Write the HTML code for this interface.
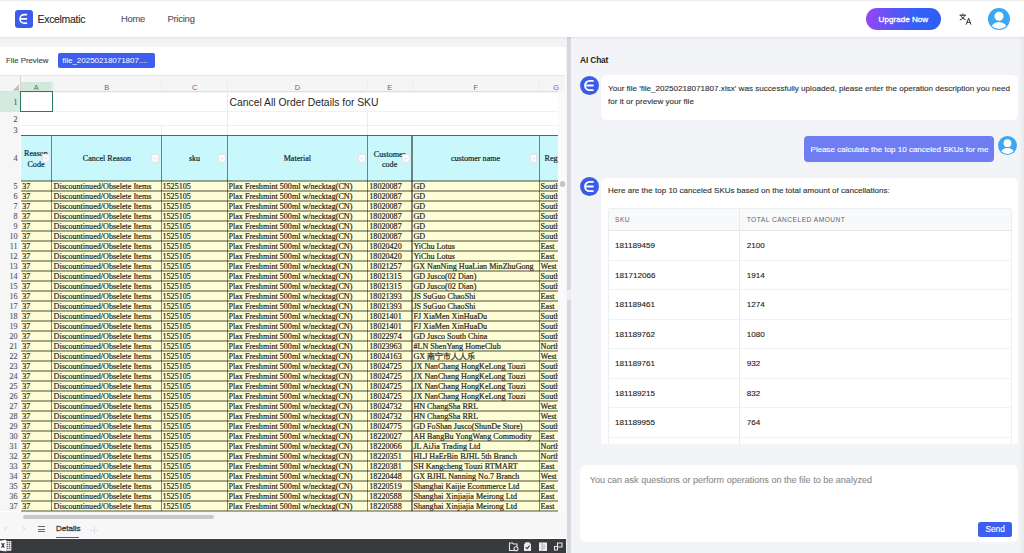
<!DOCTYPE html>
<html><head><meta charset="utf-8"><style>
html,body{margin:0;padding:0;width:1024px;height:553px;overflow:hidden;background:#f1f2f4}
.r,.t{position:absolute}
.t{white-space:nowrap}
.s{-webkit-text-stroke:0.2px currentColor}
.m{-webkit-text-stroke:0.3px currentColor}
.n{-webkit-text-stroke:0.12px currentColor}
</style></head><body>
<div class="r" style="left:0px;top:0px;width:1024px;height:553px;background:#f2f3f5"></div>
<div class="r" style="left:0px;top:46.5px;width:566px;height:506.5px;background:#fff"></div>
<div class="r" style="left:566.5px;top:37px;width:4.3px;height:516px;background:#d7d8db"></div>
<div class="r" style="left:566.5px;top:290px;width:4.3px;height:10px;background:#eceef0"></div>
<div class="r" style="left:570.8px;top:37px;width:453.2px;height:516px;background:#f3f4f7"></div>
<div class="r" style="left:1019px;top:37px;width:5px;height:516px;background:linear-gradient(90deg,#f3f4f7,#e9eaec)"></div>
<div class="r" style="left:0px;top:0px;width:1024px;height:37px;background:#fff;box-shadow:0 1px 2px rgba(0,0,0,0.08)"></div>
<div class="r" style="left:0px;top:0px;width:1024px;height:2.4px;background:linear-gradient(#e9e9e9,#f3f3f3 40%,#fff)"></div>
<div class="r" style="left:15px;top:9.8px;width:17.8px;height:17.8px;background:#3c5ce7;border-radius:3px"><svg width="100%" height="100%" viewBox="0 0 20 20"><path d="M12.9 5.2H10.4A4.8 4.8 0 0 0 10.4 14.8H12.9M7.4 10H12.9" fill="none" stroke="#fff" stroke-width="1.8" stroke-linecap="round"/></svg></div>
<div class="t n" style="left:37.60px;top:11.96px;font:normal 10.5px/14px 'Liberation Sans', sans-serif;color:#2b2b2b;letter-spacing:-0.33px;">Excelmatic</div>
<div class="t n" style="left:120.90px;top:12.44px;font:normal 9.4px/13px 'Liberation Sans', sans-serif;color:#555;letter-spacing:-0.2px;">Home</div>
<div class="t n" style="left:167.40px;top:12.44px;font:normal 9.4px/13px 'Liberation Sans', sans-serif;color:#555;letter-spacing:-0.2px;">Pricing</div>
<div class="r" style="left:865.6px;top:8px;width:75.6px;height:22px;border-radius:11px;background:linear-gradient(90deg,#9546f6 0%,#5d55f4 35%,#3260f6 68%,#2d5ef4 100%)"></div>
<div class="t m" style="left:878.60px;top:13.79px;font:normal 8.1px/11px 'Liberation Sans', sans-serif;color:#fff;">Upgrade Now</div>
<svg class="r" style="left:959px;top:13px;width:14px;height:12px" viewBox="0 0 14 12"><g fill="none" stroke="#2a2a2a" stroke-width="0.95" stroke-linecap="round" stroke-linejoin="round"><path d="M1 2.2H6.6M3.8 0.9V2.2M1.8 2.2C2.6 4.6 4.2 6 6.3 6.7M5.8 2.2C5.2 4.6 3.5 6 1.2 6.8"/><path d="M7.3 11.3L9.6 5.2L11.9 11.3M8.1 9.3H11.1"/></g></svg>
<div class="r" style="left:988px;top:8px;width:22px;height:22px"><svg width="100%" height="100%" viewBox="0 0 22 22"><defs><clipPath id="avc"><circle cx="11" cy="11" r="10"/></clipPath></defs><circle cx="11" cy="11" r="11" fill="#3aa7f4"/><circle cx="11" cy="8.3" r="4.5" fill="#fff"/><ellipse cx="11" cy="19.6" rx="7.6" ry="5.6" fill="#fff" clip-path="url(#avc)"/></svg></div>
<div class="t n" style="left:6.00px;top:55.10px;font:normal 7.8px/11px 'Liberation Sans', sans-serif;color:#444;">File Preview</div>
<div class="r" style="left:58px;top:53px;width:97.2px;height:15px;background:#3d5ef0;border-radius:2px"></div>
<div class="t " style="left:62.30px;top:55.33px;font:normal 8px/11px 'Liberation Sans', sans-serif;color:#fff;letter-spacing:-0.02px;">file_20250218071807....</div>
<div class="r" style="left:0;top:0;width:566px;height:553px;overflow:hidden">
<div class="r" style="left:0px;top:74.5px;width:564.5px;height:17px;background:#f5f5f5;border-top:0.6px solid #e6e6e6"></div>
<div class="r" style="left:0px;top:91.5px;width:20.5px;height:419px;background:#f6f6f6"></div>
<div class="r" style="left:0px;top:91px;width:558px;height:0.6px;background:#dedede"></div>
<div class="r" style="left:20px;top:76px;width:0.8px;height:15.5px;background:#d6d6d6"></div>
<div class="r" style="left:19.6px;top:91.5px;width:1px;height:419.5px;background:#fff"></div>
<div class="r" style="left:20.5px;top:82px;width:32px;height:9.5px;background:#d0e9dc"></div>
<div class="r" style="left:0px;top:91.5px;width:20.5px;height:20px;background:#d3eadf"></div>
<svg class="r" style="left:12px;top:83.5px;width:8px;height:7px" viewBox="0 0 8 7"><path d="M7 0.5V6.5H0.5Z" fill="#bdbdbd"/></svg>
<div class="t " style="left:-63.90px;width:200px;text-align:center;top:82.54px;font:normal 7.4px/10px 'Liberation Sans', sans-serif;color:#6a6a6a;">A</div>
<div class="t " style="left:6.65px;width:200px;text-align:center;top:82.54px;font:normal 7.4px/10px 'Liberation Sans', sans-serif;color:#6a6a6a;">B</div>
<div class="t " style="left:94.55px;width:200px;text-align:center;top:82.54px;font:normal 7.4px/10px 'Liberation Sans', sans-serif;color:#6a6a6a;">C</div>
<div class="t " style="left:197.40px;width:200px;text-align:center;top:82.54px;font:normal 7.4px/10px 'Liberation Sans', sans-serif;color:#6a6a6a;">D</div>
<div class="t " style="left:289.65px;width:200px;text-align:center;top:82.54px;font:normal 7.4px/10px 'Liberation Sans', sans-serif;color:#6a6a6a;">E</div>
<div class="t " style="left:375.75px;width:200px;text-align:center;top:82.54px;font:normal 7.4px/10px 'Liberation Sans', sans-serif;color:#6a6a6a;">F</div>
<div class="t " style="left:456.00px;width:200px;text-align:center;top:82.54px;font:normal 7.4px/10px 'Liberation Sans', sans-serif;color:#6a6a6a;">G</div>
<div class="r" style="left:51.400000000000006px;top:80px;width:0.6px;height:11.5px;background:#ececec"></div>
<div class="r" style="left:161.29999999999998px;top:80px;width:0.6px;height:11.5px;background:#ececec"></div>
<div class="r" style="left:227.2px;top:80px;width:0.6px;height:11.5px;background:#ececec"></div>
<div class="r" style="left:367.0px;top:80px;width:0.6px;height:11.5px;background:#ececec"></div>
<div class="r" style="left:411.7px;top:80px;width:0.6px;height:11.5px;background:#ececec"></div>
<div class="r" style="left:539.2px;top:80px;width:0.6px;height:11.5px;background:#ececec"></div>
<div class="r" style="left:20.5px;top:110.7px;width:537.3px;height:0.6px;background:#f0f0f0"></div>
<div class="r" style="left:20.5px;top:124.7px;width:537.3px;height:0.6px;background:#f0f0f0"></div>
<div class="r" style="left:161.3px;top:125px;width:0.6px;height:10.5px;background:#ececec"></div>
<div class="r" style="left:227.2px;top:91.5px;width:0.6px;height:44px;background:#ececec"></div>
<div class="r" style="left:367px;top:111px;width:0.6px;height:24.5px;background:#ececec"></div>
<div class="t n" style="left:-182.40px;width:200px;text-align:right;top:96.97px;font:normal 8.1px/11px 'Liberation Serif', serif;color:#5a5a5a;">1</div>
<div class="t n" style="left:-182.40px;width:200px;text-align:right;top:113.57px;font:normal 8.1px/11px 'Liberation Serif', serif;color:#5a5a5a;">2</div>
<div class="t n" style="left:-182.40px;width:200px;text-align:right;top:125.47px;font:normal 8.1px/11px 'Liberation Serif', serif;color:#5a5a5a;">3</div>
<div class="t n" style="left:-182.40px;width:200px;text-align:right;top:153.17px;font:normal 8.1px/11px 'Liberation Serif', serif;color:#5a5a5a;">4</div>
<div class="t n" style="left:-182.40px;width:200px;text-align:right;top:180.57px;font:normal 8.1px/11px 'Liberation Serif', serif;color:#5a5a5a;">5</div>
<div class="t n" style="left:-182.40px;width:200px;text-align:right;top:190.57px;font:normal 8.1px/11px 'Liberation Serif', serif;color:#5a5a5a;">6</div>
<div class="t n" style="left:-182.40px;width:200px;text-align:right;top:200.57px;font:normal 8.1px/11px 'Liberation Serif', serif;color:#5a5a5a;">7</div>
<div class="t n" style="left:-182.40px;width:200px;text-align:right;top:210.57px;font:normal 8.1px/11px 'Liberation Serif', serif;color:#5a5a5a;">8</div>
<div class="t n" style="left:-182.40px;width:200px;text-align:right;top:220.57px;font:normal 8.1px/11px 'Liberation Serif', serif;color:#5a5a5a;">9</div>
<div class="t n" style="left:-182.40px;width:200px;text-align:right;top:230.57px;font:normal 8.1px/11px 'Liberation Serif', serif;color:#5a5a5a;">10</div>
<div class="t n" style="left:-182.40px;width:200px;text-align:right;top:240.57px;font:normal 8.1px/11px 'Liberation Serif', serif;color:#5a5a5a;">11</div>
<div class="t n" style="left:-182.40px;width:200px;text-align:right;top:250.57px;font:normal 8.1px/11px 'Liberation Serif', serif;color:#5a5a5a;">12</div>
<div class="t n" style="left:-182.40px;width:200px;text-align:right;top:260.57px;font:normal 8.1px/11px 'Liberation Serif', serif;color:#5a5a5a;">13</div>
<div class="t n" style="left:-182.40px;width:200px;text-align:right;top:270.57px;font:normal 8.1px/11px 'Liberation Serif', serif;color:#5a5a5a;">14</div>
<div class="t n" style="left:-182.40px;width:200px;text-align:right;top:280.57px;font:normal 8.1px/11px 'Liberation Serif', serif;color:#5a5a5a;">15</div>
<div class="t n" style="left:-182.40px;width:200px;text-align:right;top:290.57px;font:normal 8.1px/11px 'Liberation Serif', serif;color:#5a5a5a;">16</div>
<div class="t n" style="left:-182.40px;width:200px;text-align:right;top:300.57px;font:normal 8.1px/11px 'Liberation Serif', serif;color:#5a5a5a;">17</div>
<div class="t n" style="left:-182.40px;width:200px;text-align:right;top:310.57px;font:normal 8.1px/11px 'Liberation Serif', serif;color:#5a5a5a;">18</div>
<div class="t n" style="left:-182.40px;width:200px;text-align:right;top:320.57px;font:normal 8.1px/11px 'Liberation Serif', serif;color:#5a5a5a;">19</div>
<div class="t n" style="left:-182.40px;width:200px;text-align:right;top:330.57px;font:normal 8.1px/11px 'Liberation Serif', serif;color:#5a5a5a;">20</div>
<div class="t n" style="left:-182.40px;width:200px;text-align:right;top:340.57px;font:normal 8.1px/11px 'Liberation Serif', serif;color:#5a5a5a;">21</div>
<div class="t n" style="left:-182.40px;width:200px;text-align:right;top:350.57px;font:normal 8.1px/11px 'Liberation Serif', serif;color:#5a5a5a;">22</div>
<div class="t n" style="left:-182.40px;width:200px;text-align:right;top:360.57px;font:normal 8.1px/11px 'Liberation Serif', serif;color:#5a5a5a;">23</div>
<div class="t n" style="left:-182.40px;width:200px;text-align:right;top:370.57px;font:normal 8.1px/11px 'Liberation Serif', serif;color:#5a5a5a;">24</div>
<div class="t n" style="left:-182.40px;width:200px;text-align:right;top:380.57px;font:normal 8.1px/11px 'Liberation Serif', serif;color:#5a5a5a;">25</div>
<div class="t n" style="left:-182.40px;width:200px;text-align:right;top:390.57px;font:normal 8.1px/11px 'Liberation Serif', serif;color:#5a5a5a;">26</div>
<div class="t n" style="left:-182.40px;width:200px;text-align:right;top:400.57px;font:normal 8.1px/11px 'Liberation Serif', serif;color:#5a5a5a;">27</div>
<div class="t n" style="left:-182.40px;width:200px;text-align:right;top:410.57px;font:normal 8.1px/11px 'Liberation Serif', serif;color:#5a5a5a;">28</div>
<div class="t n" style="left:-182.40px;width:200px;text-align:right;top:420.57px;font:normal 8.1px/11px 'Liberation Serif', serif;color:#5a5a5a;">29</div>
<div class="t n" style="left:-182.40px;width:200px;text-align:right;top:430.57px;font:normal 8.1px/11px 'Liberation Serif', serif;color:#5a5a5a;">30</div>
<div class="t n" style="left:-182.40px;width:200px;text-align:right;top:440.57px;font:normal 8.1px/11px 'Liberation Serif', serif;color:#5a5a5a;">31</div>
<div class="t n" style="left:-182.40px;width:200px;text-align:right;top:450.57px;font:normal 8.1px/11px 'Liberation Serif', serif;color:#5a5a5a;">32</div>
<div class="t n" style="left:-182.40px;width:200px;text-align:right;top:460.57px;font:normal 8.1px/11px 'Liberation Serif', serif;color:#5a5a5a;">33</div>
<div class="t n" style="left:-182.40px;width:200px;text-align:right;top:470.57px;font:normal 8.1px/11px 'Liberation Serif', serif;color:#5a5a5a;">34</div>
<div class="t n" style="left:-182.40px;width:200px;text-align:right;top:480.57px;font:normal 8.1px/11px 'Liberation Serif', serif;color:#5a5a5a;">35</div>
<div class="t n" style="left:-182.40px;width:200px;text-align:right;top:490.57px;font:normal 8.1px/11px 'Liberation Serif', serif;color:#5a5a5a;">36</div>
<div class="t n" style="left:-182.40px;width:200px;text-align:right;top:500.57px;font:normal 8.1px/11px 'Liberation Serif', serif;color:#5a5a5a;">37</div>
<div class="t " style="left:229.60px;top:96.31px;font:normal 10.35px/14px 'Liberation Sans', sans-serif;color:#1f1f1f;">Cancel All Order Details for SKU</div>
<div class="r" style="left:20.3px;top:91.1px;width:32.4px;height:20.7px;border:1.5px solid #2d7a55;box-sizing:border-box"></div>
<div class="r" style="left:20.5px;top:135.5px;width:537.3px;height:45px;background:#c8f8fc"></div>
<div class="r" style="left:20.5px;top:180.5px;width:537.3px;height:330px;background:#fdfdd6"></div>
<div class="r" style="left:20.5px;top:135.0px;width:537.3px;height:1.1px;background:rgba(0,0,0,0.62)"></div>
<div class="r" style="left:20.5px;top:179.7px;width:537.3px;height:2.1px;background:rgba(20,20,0,0.38)"></div>
<div class="r" style="left:20.5px;top:189.7px;width:537.3px;height:2.1px;background:rgba(20,20,0,0.38)"></div>
<div class="r" style="left:20.5px;top:199.7px;width:537.3px;height:2.1px;background:rgba(20,20,0,0.38)"></div>
<div class="r" style="left:20.5px;top:209.7px;width:537.3px;height:2.1px;background:rgba(20,20,0,0.38)"></div>
<div class="r" style="left:20.5px;top:219.7px;width:537.3px;height:2.1px;background:rgba(20,20,0,0.38)"></div>
<div class="r" style="left:20.5px;top:229.7px;width:537.3px;height:2.1px;background:rgba(20,20,0,0.38)"></div>
<div class="r" style="left:20.5px;top:239.7px;width:537.3px;height:2.1px;background:rgba(20,20,0,0.38)"></div>
<div class="r" style="left:20.5px;top:249.7px;width:537.3px;height:2.1px;background:rgba(20,20,0,0.38)"></div>
<div class="r" style="left:20.5px;top:259.7px;width:537.3px;height:2.1px;background:rgba(20,20,0,0.38)"></div>
<div class="r" style="left:20.5px;top:269.7px;width:537.3px;height:2.1px;background:rgba(20,20,0,0.38)"></div>
<div class="r" style="left:20.5px;top:279.7px;width:537.3px;height:2.1px;background:rgba(20,20,0,0.38)"></div>
<div class="r" style="left:20.5px;top:289.7px;width:537.3px;height:2.1px;background:rgba(20,20,0,0.38)"></div>
<div class="r" style="left:20.5px;top:299.7px;width:537.3px;height:2.1px;background:rgba(20,20,0,0.38)"></div>
<div class="r" style="left:20.5px;top:309.7px;width:537.3px;height:2.1px;background:rgba(20,20,0,0.38)"></div>
<div class="r" style="left:20.5px;top:319.7px;width:537.3px;height:2.1px;background:rgba(20,20,0,0.38)"></div>
<div class="r" style="left:20.5px;top:329.7px;width:537.3px;height:2.1px;background:rgba(20,20,0,0.38)"></div>
<div class="r" style="left:20.5px;top:339.7px;width:537.3px;height:2.1px;background:rgba(20,20,0,0.38)"></div>
<div class="r" style="left:20.5px;top:349.7px;width:537.3px;height:2.1px;background:rgba(20,20,0,0.38)"></div>
<div class="r" style="left:20.5px;top:359.7px;width:537.3px;height:2.1px;background:rgba(20,20,0,0.38)"></div>
<div class="r" style="left:20.5px;top:369.7px;width:537.3px;height:2.1px;background:rgba(20,20,0,0.38)"></div>
<div class="r" style="left:20.5px;top:379.7px;width:537.3px;height:2.1px;background:rgba(20,20,0,0.38)"></div>
<div class="r" style="left:20.5px;top:389.7px;width:537.3px;height:2.1px;background:rgba(20,20,0,0.38)"></div>
<div class="r" style="left:20.5px;top:399.7px;width:537.3px;height:2.1px;background:rgba(20,20,0,0.38)"></div>
<div class="r" style="left:20.5px;top:409.7px;width:537.3px;height:2.1px;background:rgba(20,20,0,0.38)"></div>
<div class="r" style="left:20.5px;top:419.7px;width:537.3px;height:2.1px;background:rgba(20,20,0,0.38)"></div>
<div class="r" style="left:20.5px;top:429.7px;width:537.3px;height:2.1px;background:rgba(20,20,0,0.38)"></div>
<div class="r" style="left:20.5px;top:439.7px;width:537.3px;height:2.1px;background:rgba(20,20,0,0.38)"></div>
<div class="r" style="left:20.5px;top:449.7px;width:537.3px;height:2.1px;background:rgba(20,20,0,0.38)"></div>
<div class="r" style="left:20.5px;top:459.7px;width:537.3px;height:2.1px;background:rgba(20,20,0,0.38)"></div>
<div class="r" style="left:20.5px;top:469.7px;width:537.3px;height:2.1px;background:rgba(20,20,0,0.38)"></div>
<div class="r" style="left:20.5px;top:479.7px;width:537.3px;height:2.1px;background:rgba(20,20,0,0.38)"></div>
<div class="r" style="left:20.5px;top:489.7px;width:537.3px;height:2.1px;background:rgba(20,20,0,0.38)"></div>
<div class="r" style="left:20.5px;top:499.7px;width:537.3px;height:2.1px;background:rgba(20,20,0,0.38)"></div>
<div class="r" style="left:20.5px;top:509.7px;width:537.3px;height:2.1px;background:rgba(20,20,0,0.38)"></div>
<div class="r" style="left:50.95px;top:135.5px;width:1.5px;height:375.5px;background:rgba(0,0,0,0.47)"></div>
<div class="r" style="left:160.85px;top:135.5px;width:1.5px;height:375.5px;background:rgba(0,0,0,0.47)"></div>
<div class="r" style="left:226.75px;top:135.5px;width:1.5px;height:375.5px;background:rgba(0,0,0,0.47)"></div>
<div class="r" style="left:366.55px;top:135.5px;width:1.5px;height:375.5px;background:rgba(0,0,0,0.47)"></div>
<div class="r" style="left:411.25px;top:135.5px;width:1.5px;height:375.5px;background:rgba(0,0,0,0.47)"></div>
<div class="r" style="left:538.75px;top:135.5px;width:1.5px;height:375.5px;background:rgba(0,0,0,0.47)"></div>
<div class="t s" style="left:-64.00px;width:200px;text-align:center;top:148.07px;font:normal 8.1px/11px 'Liberation Serif', serif;color:#14282c;">Reason</div>
<div class="t s" style="left:-64.00px;width:200px;text-align:center;top:159.17px;font:normal 8.1px/11px 'Liberation Serif', serif;color:#14282c;">Code</div>
<div class="t s" style="left:7.00px;width:200px;text-align:center;top:153.37px;font:normal 8.1px/11px 'Liberation Serif', serif;color:#14282c;">Cancel Reason</div>
<div class="t s" style="left:94.50px;width:200px;text-align:center;top:153.37px;font:normal 8.1px/11px 'Liberation Serif', serif;color:#14282c;">sku</div>
<div class="t s" style="left:197.40px;width:200px;text-align:center;top:153.37px;font:normal 8.1px/11px 'Liberation Serif', serif;color:#14282c;">Material</div>
<div class="t s" style="left:289.60px;width:200px;text-align:center;top:148.77px;font:normal 8.1px/11px 'Liberation Serif', serif;color:#14282c;">Customer</div>
<div class="t s" style="left:289.60px;width:200px;text-align:center;top:159.17px;font:normal 8.1px/11px 'Liberation Serif', serif;color:#14282c;">code</div>
<div class="t s" style="left:375.50px;width:200px;text-align:center;top:153.37px;font:normal 8.1px/11px 'Liberation Serif', serif;color:#14282c;">customer name</div>
<div class="t s" style="left:544.60px;top:153.27px;font:normal 8.1px/11px 'Liberation Serif', serif;color:#14282c;">Region</div>
<div class="r" style="left:41.8px;top:154.2px;width:7.8px;height:9px;background:linear-gradient(#fff,#f6f8f8);border:0.7px solid #dfe6e7;box-sizing:border-box"><svg style="display:block" width="100%" height="100%" viewBox="0 0 8 8.6"><path d="M2.4 3.3L4 4.9L5.6 3.3" fill="none" stroke="#c4b9bf" stroke-width="0.75"/></svg></div>
<div class="r" style="left:151.3px;top:154.2px;width:7.8px;height:9px;background:linear-gradient(#fff,#f6f8f8);border:0.7px solid #dfe6e7;box-sizing:border-box"><svg style="display:block" width="100%" height="100%" viewBox="0 0 8 8.6"><path d="M2.4 3.3L4 4.9L5.6 3.3" fill="none" stroke="#c4b9bf" stroke-width="0.75"/></svg></div>
<div class="r" style="left:218px;top:154.2px;width:7.8px;height:9px;background:linear-gradient(#fff,#f6f8f8);border:0.7px solid #dfe6e7;box-sizing:border-box"><svg style="display:block" width="100%" height="100%" viewBox="0 0 8 8.6"><path d="M2.4 3.3L4 4.9L5.6 3.3" fill="none" stroke="#c4b9bf" stroke-width="0.75"/></svg></div>
<div class="r" style="left:357.8px;top:154.2px;width:7.8px;height:9px;background:linear-gradient(#fff,#f6f8f8);border:0.7px solid #dfe6e7;box-sizing:border-box"><svg style="display:block" width="100%" height="100%" viewBox="0 0 8 8.6"><path d="M2.4 3.3L4 4.9L5.6 3.3" fill="none" stroke="#c4b9bf" stroke-width="0.75"/></svg></div>
<div class="r" style="left:402.3px;top:154.2px;width:7.8px;height:9px;background:linear-gradient(#fff,#f6f8f8);border:0.7px solid #dfe6e7;box-sizing:border-box"><svg style="display:block" width="100%" height="100%" viewBox="0 0 8 8.6"><path d="M2.4 3.3L4 4.9L5.6 3.3" fill="none" stroke="#c4b9bf" stroke-width="0.75"/></svg></div>
<div class="r" style="left:529.6px;top:154.2px;width:7.8px;height:9px;background:linear-gradient(#fff,#f6f8f8);border:0.7px solid #dfe6e7;box-sizing:border-box"><svg style="display:block" width="100%" height="100%" viewBox="0 0 8 8.6"><path d="M2.4 3.3L4 4.9L5.6 3.3" fill="none" stroke="#c4b9bf" stroke-width="0.75"/></svg></div>
<div class="t s" style="left:22.30px;top:180.57px;font:normal 8.1px/11px 'Liberation Serif', serif;color:#26261a;">37</div>
<div class="t s" style="left:53.60px;top:180.57px;font:normal 8.1px/11px 'Liberation Serif', serif;color:#26261a;">Discountinued/Obselete Items</div>
<div class="t s" style="left:162.50px;top:180.57px;font:normal 8.1px/11px 'Liberation Serif', serif;color:#26261a;">1525105</div>
<div class="t s" style="left:228.50px;top:180.57px;font:normal 8.1px/11px 'Liberation Serif', serif;color:#26261a;">Plax Freshmint 500ml w/necktag(CN)</div>
<div class="t s" style="left:369.30px;top:180.57px;font:normal 8.1px/11px 'Liberation Serif', serif;color:#26261a;">18020087</div>
<div class="t s" style="left:413.40px;top:180.57px;font:normal 8.1px/11px 'Liberation Serif', serif;color:#26261a;">GD</div>
<div class="t s" style="left:540.60px;top:180.57px;font:normal 8.1px/11px 'Liberation Serif', serif;color:#26261a;">South</div>
<div class="t s" style="left:22.30px;top:190.57px;font:normal 8.1px/11px 'Liberation Serif', serif;color:#26261a;">37</div>
<div class="t s" style="left:53.60px;top:190.57px;font:normal 8.1px/11px 'Liberation Serif', serif;color:#26261a;">Discountinued/Obselete Items</div>
<div class="t s" style="left:162.50px;top:190.57px;font:normal 8.1px/11px 'Liberation Serif', serif;color:#26261a;">1525105</div>
<div class="t s" style="left:228.50px;top:190.57px;font:normal 8.1px/11px 'Liberation Serif', serif;color:#26261a;">Plax Freshmint 500ml w/necktag(CN)</div>
<div class="t s" style="left:369.30px;top:190.57px;font:normal 8.1px/11px 'Liberation Serif', serif;color:#26261a;">18020087</div>
<div class="t s" style="left:413.40px;top:190.57px;font:normal 8.1px/11px 'Liberation Serif', serif;color:#26261a;">GD</div>
<div class="t s" style="left:540.60px;top:190.57px;font:normal 8.1px/11px 'Liberation Serif', serif;color:#26261a;">South</div>
<div class="t s" style="left:22.30px;top:200.57px;font:normal 8.1px/11px 'Liberation Serif', serif;color:#26261a;">37</div>
<div class="t s" style="left:53.60px;top:200.57px;font:normal 8.1px/11px 'Liberation Serif', serif;color:#26261a;">Discountinued/Obselete Items</div>
<div class="t s" style="left:162.50px;top:200.57px;font:normal 8.1px/11px 'Liberation Serif', serif;color:#26261a;">1525105</div>
<div class="t s" style="left:228.50px;top:200.57px;font:normal 8.1px/11px 'Liberation Serif', serif;color:#26261a;">Plax Freshmint 500ml w/necktag(CN)</div>
<div class="t s" style="left:369.30px;top:200.57px;font:normal 8.1px/11px 'Liberation Serif', serif;color:#26261a;">18020087</div>
<div class="t s" style="left:413.40px;top:200.57px;font:normal 8.1px/11px 'Liberation Serif', serif;color:#26261a;">GD</div>
<div class="t s" style="left:540.60px;top:200.57px;font:normal 8.1px/11px 'Liberation Serif', serif;color:#26261a;">South</div>
<div class="t s" style="left:22.30px;top:210.57px;font:normal 8.1px/11px 'Liberation Serif', serif;color:#26261a;">37</div>
<div class="t s" style="left:53.60px;top:210.57px;font:normal 8.1px/11px 'Liberation Serif', serif;color:#26261a;">Discountinued/Obselete Items</div>
<div class="t s" style="left:162.50px;top:210.57px;font:normal 8.1px/11px 'Liberation Serif', serif;color:#26261a;">1525105</div>
<div class="t s" style="left:228.50px;top:210.57px;font:normal 8.1px/11px 'Liberation Serif', serif;color:#26261a;">Plax Freshmint 500ml w/necktag(CN)</div>
<div class="t s" style="left:369.30px;top:210.57px;font:normal 8.1px/11px 'Liberation Serif', serif;color:#26261a;">18020087</div>
<div class="t s" style="left:413.40px;top:210.57px;font:normal 8.1px/11px 'Liberation Serif', serif;color:#26261a;">GD</div>
<div class="t s" style="left:540.60px;top:210.57px;font:normal 8.1px/11px 'Liberation Serif', serif;color:#26261a;">South</div>
<div class="t s" style="left:22.30px;top:220.57px;font:normal 8.1px/11px 'Liberation Serif', serif;color:#26261a;">37</div>
<div class="t s" style="left:53.60px;top:220.57px;font:normal 8.1px/11px 'Liberation Serif', serif;color:#26261a;">Discountinued/Obselete Items</div>
<div class="t s" style="left:162.50px;top:220.57px;font:normal 8.1px/11px 'Liberation Serif', serif;color:#26261a;">1525105</div>
<div class="t s" style="left:228.50px;top:220.57px;font:normal 8.1px/11px 'Liberation Serif', serif;color:#26261a;">Plax Freshmint 500ml w/necktag(CN)</div>
<div class="t s" style="left:369.30px;top:220.57px;font:normal 8.1px/11px 'Liberation Serif', serif;color:#26261a;">18020087</div>
<div class="t s" style="left:413.40px;top:220.57px;font:normal 8.1px/11px 'Liberation Serif', serif;color:#26261a;">GD</div>
<div class="t s" style="left:540.60px;top:220.57px;font:normal 8.1px/11px 'Liberation Serif', serif;color:#26261a;">South</div>
<div class="t s" style="left:22.30px;top:230.57px;font:normal 8.1px/11px 'Liberation Serif', serif;color:#26261a;">37</div>
<div class="t s" style="left:53.60px;top:230.57px;font:normal 8.1px/11px 'Liberation Serif', serif;color:#26261a;">Discountinued/Obselete Items</div>
<div class="t s" style="left:162.50px;top:230.57px;font:normal 8.1px/11px 'Liberation Serif', serif;color:#26261a;">1525105</div>
<div class="t s" style="left:228.50px;top:230.57px;font:normal 8.1px/11px 'Liberation Serif', serif;color:#26261a;">Plax Freshmint 500ml w/necktag(CN)</div>
<div class="t s" style="left:369.30px;top:230.57px;font:normal 8.1px/11px 'Liberation Serif', serif;color:#26261a;">18020087</div>
<div class="t s" style="left:413.40px;top:230.57px;font:normal 8.1px/11px 'Liberation Serif', serif;color:#26261a;">GD</div>
<div class="t s" style="left:540.60px;top:230.57px;font:normal 8.1px/11px 'Liberation Serif', serif;color:#26261a;">South</div>
<div class="t s" style="left:22.30px;top:240.57px;font:normal 8.1px/11px 'Liberation Serif', serif;color:#26261a;">37</div>
<div class="t s" style="left:53.60px;top:240.57px;font:normal 8.1px/11px 'Liberation Serif', serif;color:#26261a;">Discountinued/Obselete Items</div>
<div class="t s" style="left:162.50px;top:240.57px;font:normal 8.1px/11px 'Liberation Serif', serif;color:#26261a;">1525105</div>
<div class="t s" style="left:228.50px;top:240.57px;font:normal 8.1px/11px 'Liberation Serif', serif;color:#26261a;">Plax Freshmint 500ml w/necktag(CN)</div>
<div class="t s" style="left:369.30px;top:240.57px;font:normal 8.1px/11px 'Liberation Serif', serif;color:#26261a;">18020420</div>
<div class="t s" style="left:413.40px;top:240.57px;font:normal 8.1px/11px 'Liberation Serif', serif;color:#26261a;">YiChu Lotus</div>
<div class="t s" style="left:540.60px;top:240.57px;font:normal 8.1px/11px 'Liberation Serif', serif;color:#26261a;">East</div>
<div class="t s" style="left:22.30px;top:250.57px;font:normal 8.1px/11px 'Liberation Serif', serif;color:#26261a;">37</div>
<div class="t s" style="left:53.60px;top:250.57px;font:normal 8.1px/11px 'Liberation Serif', serif;color:#26261a;">Discountinued/Obselete Items</div>
<div class="t s" style="left:162.50px;top:250.57px;font:normal 8.1px/11px 'Liberation Serif', serif;color:#26261a;">1525105</div>
<div class="t s" style="left:228.50px;top:250.57px;font:normal 8.1px/11px 'Liberation Serif', serif;color:#26261a;">Plax Freshmint 500ml w/necktag(CN)</div>
<div class="t s" style="left:369.30px;top:250.57px;font:normal 8.1px/11px 'Liberation Serif', serif;color:#26261a;">18020420</div>
<div class="t s" style="left:413.40px;top:250.57px;font:normal 8.1px/11px 'Liberation Serif', serif;color:#26261a;">YiChu Lotus</div>
<div class="t s" style="left:540.60px;top:250.57px;font:normal 8.1px/11px 'Liberation Serif', serif;color:#26261a;">East</div>
<div class="t s" style="left:22.30px;top:260.57px;font:normal 8.1px/11px 'Liberation Serif', serif;color:#26261a;">37</div>
<div class="t s" style="left:53.60px;top:260.57px;font:normal 8.1px/11px 'Liberation Serif', serif;color:#26261a;">Discountinued/Obselete Items</div>
<div class="t s" style="left:162.50px;top:260.57px;font:normal 8.1px/11px 'Liberation Serif', serif;color:#26261a;">1525105</div>
<div class="t s" style="left:228.50px;top:260.57px;font:normal 8.1px/11px 'Liberation Serif', serif;color:#26261a;">Plax Freshmint 500ml w/necktag(CN)</div>
<div class="t s" style="left:369.30px;top:260.57px;font:normal 8.1px/11px 'Liberation Serif', serif;color:#26261a;">18021257</div>
<div class="t s" style="left:413.40px;top:260.57px;font:normal 8.1px/11px 'Liberation Serif', serif;color:#26261a;">GX NanNing HuaLian MinZhuGong</div>
<div class="t s" style="left:540.60px;top:260.57px;font:normal 8.1px/11px 'Liberation Serif', serif;color:#26261a;">West</div>
<div class="t s" style="left:22.30px;top:270.57px;font:normal 8.1px/11px 'Liberation Serif', serif;color:#26261a;">37</div>
<div class="t s" style="left:53.60px;top:270.57px;font:normal 8.1px/11px 'Liberation Serif', serif;color:#26261a;">Discountinued/Obselete Items</div>
<div class="t s" style="left:162.50px;top:270.57px;font:normal 8.1px/11px 'Liberation Serif', serif;color:#26261a;">1525105</div>
<div class="t s" style="left:228.50px;top:270.57px;font:normal 8.1px/11px 'Liberation Serif', serif;color:#26261a;">Plax Freshmint 500ml w/necktag(CN)</div>
<div class="t s" style="left:369.30px;top:270.57px;font:normal 8.1px/11px 'Liberation Serif', serif;color:#26261a;">18021315</div>
<div class="t s" style="left:413.40px;top:270.57px;font:normal 8.1px/11px 'Liberation Serif', serif;color:#26261a;">GD Jusco(02 Dian)</div>
<div class="t s" style="left:540.60px;top:270.57px;font:normal 8.1px/11px 'Liberation Serif', serif;color:#26261a;">South</div>
<div class="t s" style="left:22.30px;top:280.57px;font:normal 8.1px/11px 'Liberation Serif', serif;color:#26261a;">37</div>
<div class="t s" style="left:53.60px;top:280.57px;font:normal 8.1px/11px 'Liberation Serif', serif;color:#26261a;">Discountinued/Obselete Items</div>
<div class="t s" style="left:162.50px;top:280.57px;font:normal 8.1px/11px 'Liberation Serif', serif;color:#26261a;">1525105</div>
<div class="t s" style="left:228.50px;top:280.57px;font:normal 8.1px/11px 'Liberation Serif', serif;color:#26261a;">Plax Freshmint 500ml w/necktag(CN)</div>
<div class="t s" style="left:369.30px;top:280.57px;font:normal 8.1px/11px 'Liberation Serif', serif;color:#26261a;">18021315</div>
<div class="t s" style="left:413.40px;top:280.57px;font:normal 8.1px/11px 'Liberation Serif', serif;color:#26261a;">GD Jusco(02 Dian)</div>
<div class="t s" style="left:540.60px;top:280.57px;font:normal 8.1px/11px 'Liberation Serif', serif;color:#26261a;">South</div>
<div class="t s" style="left:22.30px;top:290.57px;font:normal 8.1px/11px 'Liberation Serif', serif;color:#26261a;">37</div>
<div class="t s" style="left:53.60px;top:290.57px;font:normal 8.1px/11px 'Liberation Serif', serif;color:#26261a;">Discountinued/Obselete Items</div>
<div class="t s" style="left:162.50px;top:290.57px;font:normal 8.1px/11px 'Liberation Serif', serif;color:#26261a;">1525105</div>
<div class="t s" style="left:228.50px;top:290.57px;font:normal 8.1px/11px 'Liberation Serif', serif;color:#26261a;">Plax Freshmint 500ml w/necktag(CN)</div>
<div class="t s" style="left:369.30px;top:290.57px;font:normal 8.1px/11px 'Liberation Serif', serif;color:#26261a;">18021393</div>
<div class="t s" style="left:413.40px;top:290.57px;font:normal 8.1px/11px 'Liberation Serif', serif;color:#26261a;">JS SuGuo ChaoShi</div>
<div class="t s" style="left:540.60px;top:290.57px;font:normal 8.1px/11px 'Liberation Serif', serif;color:#26261a;">East</div>
<div class="t s" style="left:22.30px;top:300.57px;font:normal 8.1px/11px 'Liberation Serif', serif;color:#26261a;">37</div>
<div class="t s" style="left:53.60px;top:300.57px;font:normal 8.1px/11px 'Liberation Serif', serif;color:#26261a;">Discountinued/Obselete Items</div>
<div class="t s" style="left:162.50px;top:300.57px;font:normal 8.1px/11px 'Liberation Serif', serif;color:#26261a;">1525105</div>
<div class="t s" style="left:228.50px;top:300.57px;font:normal 8.1px/11px 'Liberation Serif', serif;color:#26261a;">Plax Freshmint 500ml w/necktag(CN)</div>
<div class="t s" style="left:369.30px;top:300.57px;font:normal 8.1px/11px 'Liberation Serif', serif;color:#26261a;">18021393</div>
<div class="t s" style="left:413.40px;top:300.57px;font:normal 8.1px/11px 'Liberation Serif', serif;color:#26261a;">JS SuGuo ChaoShi</div>
<div class="t s" style="left:540.60px;top:300.57px;font:normal 8.1px/11px 'Liberation Serif', serif;color:#26261a;">East</div>
<div class="t s" style="left:22.30px;top:310.57px;font:normal 8.1px/11px 'Liberation Serif', serif;color:#26261a;">37</div>
<div class="t s" style="left:53.60px;top:310.57px;font:normal 8.1px/11px 'Liberation Serif', serif;color:#26261a;">Discountinued/Obselete Items</div>
<div class="t s" style="left:162.50px;top:310.57px;font:normal 8.1px/11px 'Liberation Serif', serif;color:#26261a;">1525105</div>
<div class="t s" style="left:228.50px;top:310.57px;font:normal 8.1px/11px 'Liberation Serif', serif;color:#26261a;">Plax Freshmint 500ml w/necktag(CN)</div>
<div class="t s" style="left:369.30px;top:310.57px;font:normal 8.1px/11px 'Liberation Serif', serif;color:#26261a;">18021401</div>
<div class="t s" style="left:413.40px;top:310.57px;font:normal 8.1px/11px 'Liberation Serif', serif;color:#26261a;">FJ XiaMen XinHuaDu</div>
<div class="t s" style="left:540.60px;top:310.57px;font:normal 8.1px/11px 'Liberation Serif', serif;color:#26261a;">South</div>
<div class="t s" style="left:22.30px;top:320.57px;font:normal 8.1px/11px 'Liberation Serif', serif;color:#26261a;">37</div>
<div class="t s" style="left:53.60px;top:320.57px;font:normal 8.1px/11px 'Liberation Serif', serif;color:#26261a;">Discountinued/Obselete Items</div>
<div class="t s" style="left:162.50px;top:320.57px;font:normal 8.1px/11px 'Liberation Serif', serif;color:#26261a;">1525105</div>
<div class="t s" style="left:228.50px;top:320.57px;font:normal 8.1px/11px 'Liberation Serif', serif;color:#26261a;">Plax Freshmint 500ml w/necktag(CN)</div>
<div class="t s" style="left:369.30px;top:320.57px;font:normal 8.1px/11px 'Liberation Serif', serif;color:#26261a;">18021401</div>
<div class="t s" style="left:413.40px;top:320.57px;font:normal 8.1px/11px 'Liberation Serif', serif;color:#26261a;">FJ XiaMen XinHuaDu</div>
<div class="t s" style="left:540.60px;top:320.57px;font:normal 8.1px/11px 'Liberation Serif', serif;color:#26261a;">South</div>
<div class="t s" style="left:22.30px;top:330.57px;font:normal 8.1px/11px 'Liberation Serif', serif;color:#26261a;">37</div>
<div class="t s" style="left:53.60px;top:330.57px;font:normal 8.1px/11px 'Liberation Serif', serif;color:#26261a;">Discountinued/Obselete Items</div>
<div class="t s" style="left:162.50px;top:330.57px;font:normal 8.1px/11px 'Liberation Serif', serif;color:#26261a;">1525105</div>
<div class="t s" style="left:228.50px;top:330.57px;font:normal 8.1px/11px 'Liberation Serif', serif;color:#26261a;">Plax Freshmint 500ml w/necktag(CN)</div>
<div class="t s" style="left:369.30px;top:330.57px;font:normal 8.1px/11px 'Liberation Serif', serif;color:#26261a;">18022974</div>
<div class="t s" style="left:413.40px;top:330.57px;font:normal 8.1px/11px 'Liberation Serif', serif;color:#26261a;">GD Jusco South China</div>
<div class="t s" style="left:540.60px;top:330.57px;font:normal 8.1px/11px 'Liberation Serif', serif;color:#26261a;">South</div>
<div class="t s" style="left:22.30px;top:340.57px;font:normal 8.1px/11px 'Liberation Serif', serif;color:#26261a;">37</div>
<div class="t s" style="left:53.60px;top:340.57px;font:normal 8.1px/11px 'Liberation Serif', serif;color:#26261a;">Discountinued/Obselete Items</div>
<div class="t s" style="left:162.50px;top:340.57px;font:normal 8.1px/11px 'Liberation Serif', serif;color:#26261a;">1525105</div>
<div class="t s" style="left:228.50px;top:340.57px;font:normal 8.1px/11px 'Liberation Serif', serif;color:#26261a;">Plax Freshmint 500ml w/necktag(CN)</div>
<div class="t s" style="left:369.30px;top:340.57px;font:normal 8.1px/11px 'Liberation Serif', serif;color:#26261a;">18023963</div>
<div class="t s" style="left:413.40px;top:340.57px;font:normal 8.1px/11px 'Liberation Serif', serif;color:#26261a;">#LN ShenYang HomeClub</div>
<div class="t s" style="left:540.60px;top:340.57px;font:normal 8.1px/11px 'Liberation Serif', serif;color:#26261a;">North</div>
<div class="t s" style="left:22.30px;top:350.57px;font:normal 8.1px/11px 'Liberation Serif', serif;color:#26261a;">37</div>
<div class="t s" style="left:53.60px;top:350.57px;font:normal 8.1px/11px 'Liberation Serif', serif;color:#26261a;">Discountinued/Obselete Items</div>
<div class="t s" style="left:162.50px;top:350.57px;font:normal 8.1px/11px 'Liberation Serif', serif;color:#26261a;">1525105</div>
<div class="t s" style="left:228.50px;top:350.57px;font:normal 8.1px/11px 'Liberation Serif', serif;color:#26261a;">Plax Freshmint 500ml w/necktag(CN)</div>
<div class="t s" style="left:369.30px;top:350.57px;font:normal 8.1px/11px 'Liberation Serif', serif;color:#26261a;">18024163</div>
<div class="t s" style="left:413.40px;top:350.57px;font:normal 8.1px/11px 'Liberation Serif', serif;color:#26261a;">GX 南宁市人人乐</div>
<div class="t s" style="left:540.60px;top:350.57px;font:normal 8.1px/11px 'Liberation Serif', serif;color:#26261a;">West</div>
<div class="t s" style="left:22.30px;top:360.57px;font:normal 8.1px/11px 'Liberation Serif', serif;color:#26261a;">37</div>
<div class="t s" style="left:53.60px;top:360.57px;font:normal 8.1px/11px 'Liberation Serif', serif;color:#26261a;">Discountinued/Obselete Items</div>
<div class="t s" style="left:162.50px;top:360.57px;font:normal 8.1px/11px 'Liberation Serif', serif;color:#26261a;">1525105</div>
<div class="t s" style="left:228.50px;top:360.57px;font:normal 8.1px/11px 'Liberation Serif', serif;color:#26261a;">Plax Freshmint 500ml w/necktag(CN)</div>
<div class="t s" style="left:369.30px;top:360.57px;font:normal 8.1px/11px 'Liberation Serif', serif;color:#26261a;">18024725</div>
<div class="t s" style="left:413.40px;top:360.57px;font:normal 8.1px/11px 'Liberation Serif', serif;color:#26261a;">JX NanChang HongKeLong Touzi</div>
<div class="t s" style="left:540.60px;top:360.57px;font:normal 8.1px/11px 'Liberation Serif', serif;color:#26261a;">South</div>
<div class="t s" style="left:22.30px;top:370.57px;font:normal 8.1px/11px 'Liberation Serif', serif;color:#26261a;">37</div>
<div class="t s" style="left:53.60px;top:370.57px;font:normal 8.1px/11px 'Liberation Serif', serif;color:#26261a;">Discountinued/Obselete Items</div>
<div class="t s" style="left:162.50px;top:370.57px;font:normal 8.1px/11px 'Liberation Serif', serif;color:#26261a;">1525105</div>
<div class="t s" style="left:228.50px;top:370.57px;font:normal 8.1px/11px 'Liberation Serif', serif;color:#26261a;">Plax Freshmint 500ml w/necktag(CN)</div>
<div class="t s" style="left:369.30px;top:370.57px;font:normal 8.1px/11px 'Liberation Serif', serif;color:#26261a;">18024725</div>
<div class="t s" style="left:413.40px;top:370.57px;font:normal 8.1px/11px 'Liberation Serif', serif;color:#26261a;">JX NanChang HongKeLong Touzi</div>
<div class="t s" style="left:540.60px;top:370.57px;font:normal 8.1px/11px 'Liberation Serif', serif;color:#26261a;">South</div>
<div class="t s" style="left:22.30px;top:380.57px;font:normal 8.1px/11px 'Liberation Serif', serif;color:#26261a;">37</div>
<div class="t s" style="left:53.60px;top:380.57px;font:normal 8.1px/11px 'Liberation Serif', serif;color:#26261a;">Discountinued/Obselete Items</div>
<div class="t s" style="left:162.50px;top:380.57px;font:normal 8.1px/11px 'Liberation Serif', serif;color:#26261a;">1525105</div>
<div class="t s" style="left:228.50px;top:380.57px;font:normal 8.1px/11px 'Liberation Serif', serif;color:#26261a;">Plax Freshmint 500ml w/necktag(CN)</div>
<div class="t s" style="left:369.30px;top:380.57px;font:normal 8.1px/11px 'Liberation Serif', serif;color:#26261a;">18024725</div>
<div class="t s" style="left:413.40px;top:380.57px;font:normal 8.1px/11px 'Liberation Serif', serif;color:#26261a;">JX NanChang HongKeLong Touzi</div>
<div class="t s" style="left:540.60px;top:380.57px;font:normal 8.1px/11px 'Liberation Serif', serif;color:#26261a;">South</div>
<div class="t s" style="left:22.30px;top:390.57px;font:normal 8.1px/11px 'Liberation Serif', serif;color:#26261a;">37</div>
<div class="t s" style="left:53.60px;top:390.57px;font:normal 8.1px/11px 'Liberation Serif', serif;color:#26261a;">Discountinued/Obselete Items</div>
<div class="t s" style="left:162.50px;top:390.57px;font:normal 8.1px/11px 'Liberation Serif', serif;color:#26261a;">1525105</div>
<div class="t s" style="left:228.50px;top:390.57px;font:normal 8.1px/11px 'Liberation Serif', serif;color:#26261a;">Plax Freshmint 500ml w/necktag(CN)</div>
<div class="t s" style="left:369.30px;top:390.57px;font:normal 8.1px/11px 'Liberation Serif', serif;color:#26261a;">18024725</div>
<div class="t s" style="left:413.40px;top:390.57px;font:normal 8.1px/11px 'Liberation Serif', serif;color:#26261a;">JX NanChang HongKeLong Touzi</div>
<div class="t s" style="left:540.60px;top:390.57px;font:normal 8.1px/11px 'Liberation Serif', serif;color:#26261a;">South</div>
<div class="t s" style="left:22.30px;top:400.57px;font:normal 8.1px/11px 'Liberation Serif', serif;color:#26261a;">37</div>
<div class="t s" style="left:53.60px;top:400.57px;font:normal 8.1px/11px 'Liberation Serif', serif;color:#26261a;">Discountinued/Obselete Items</div>
<div class="t s" style="left:162.50px;top:400.57px;font:normal 8.1px/11px 'Liberation Serif', serif;color:#26261a;">1525105</div>
<div class="t s" style="left:228.50px;top:400.57px;font:normal 8.1px/11px 'Liberation Serif', serif;color:#26261a;">Plax Freshmint 500ml w/necktag(CN)</div>
<div class="t s" style="left:369.30px;top:400.57px;font:normal 8.1px/11px 'Liberation Serif', serif;color:#26261a;">18024732</div>
<div class="t s" style="left:413.40px;top:400.57px;font:normal 8.1px/11px 'Liberation Serif', serif;color:#26261a;">HN ChangSha RRL</div>
<div class="t s" style="left:540.60px;top:400.57px;font:normal 8.1px/11px 'Liberation Serif', serif;color:#26261a;">West</div>
<div class="t s" style="left:22.30px;top:410.57px;font:normal 8.1px/11px 'Liberation Serif', serif;color:#26261a;">37</div>
<div class="t s" style="left:53.60px;top:410.57px;font:normal 8.1px/11px 'Liberation Serif', serif;color:#26261a;">Discountinued/Obselete Items</div>
<div class="t s" style="left:162.50px;top:410.57px;font:normal 8.1px/11px 'Liberation Serif', serif;color:#26261a;">1525105</div>
<div class="t s" style="left:228.50px;top:410.57px;font:normal 8.1px/11px 'Liberation Serif', serif;color:#26261a;">Plax Freshmint 500ml w/necktag(CN)</div>
<div class="t s" style="left:369.30px;top:410.57px;font:normal 8.1px/11px 'Liberation Serif', serif;color:#26261a;">18024732</div>
<div class="t s" style="left:413.40px;top:410.57px;font:normal 8.1px/11px 'Liberation Serif', serif;color:#26261a;">HN ChangSha RRL</div>
<div class="t s" style="left:540.60px;top:410.57px;font:normal 8.1px/11px 'Liberation Serif', serif;color:#26261a;">West</div>
<div class="t s" style="left:22.30px;top:420.57px;font:normal 8.1px/11px 'Liberation Serif', serif;color:#26261a;">37</div>
<div class="t s" style="left:53.60px;top:420.57px;font:normal 8.1px/11px 'Liberation Serif', serif;color:#26261a;">Discountinued/Obselete Items</div>
<div class="t s" style="left:162.50px;top:420.57px;font:normal 8.1px/11px 'Liberation Serif', serif;color:#26261a;">1525105</div>
<div class="t s" style="left:228.50px;top:420.57px;font:normal 8.1px/11px 'Liberation Serif', serif;color:#26261a;">Plax Freshmint 500ml w/necktag(CN)</div>
<div class="t s" style="left:369.30px;top:420.57px;font:normal 8.1px/11px 'Liberation Serif', serif;color:#26261a;">18024775</div>
<div class="t s" style="left:413.40px;top:420.57px;font:normal 8.1px/11px 'Liberation Serif', serif;color:#26261a;">GD FoShan Jusco(ShunDe Store)</div>
<div class="t s" style="left:540.60px;top:420.57px;font:normal 8.1px/11px 'Liberation Serif', serif;color:#26261a;">South</div>
<div class="t s" style="left:22.30px;top:430.57px;font:normal 8.1px/11px 'Liberation Serif', serif;color:#26261a;">37</div>
<div class="t s" style="left:53.60px;top:430.57px;font:normal 8.1px/11px 'Liberation Serif', serif;color:#26261a;">Discountinued/Obselete Items</div>
<div class="t s" style="left:162.50px;top:430.57px;font:normal 8.1px/11px 'Liberation Serif', serif;color:#26261a;">1525105</div>
<div class="t s" style="left:228.50px;top:430.57px;font:normal 8.1px/11px 'Liberation Serif', serif;color:#26261a;">Plax Freshmint 500ml w/necktag(CN)</div>
<div class="t s" style="left:369.30px;top:430.57px;font:normal 8.1px/11px 'Liberation Serif', serif;color:#26261a;">18220027</div>
<div class="t s" style="left:413.40px;top:430.57px;font:normal 8.1px/11px 'Liberation Serif', serif;color:#26261a;">AH BangBu YongWang Commodity</div>
<div class="t s" style="left:540.60px;top:430.57px;font:normal 8.1px/11px 'Liberation Serif', serif;color:#26261a;">East</div>
<div class="t s" style="left:22.30px;top:440.57px;font:normal 8.1px/11px 'Liberation Serif', serif;color:#26261a;">37</div>
<div class="t s" style="left:53.60px;top:440.57px;font:normal 8.1px/11px 'Liberation Serif', serif;color:#26261a;">Discountinued/Obselete Items</div>
<div class="t s" style="left:162.50px;top:440.57px;font:normal 8.1px/11px 'Liberation Serif', serif;color:#26261a;">1525105</div>
<div class="t s" style="left:228.50px;top:440.57px;font:normal 8.1px/11px 'Liberation Serif', serif;color:#26261a;">Plax Freshmint 500ml w/necktag(CN)</div>
<div class="t s" style="left:369.30px;top:440.57px;font:normal 8.1px/11px 'Liberation Serif', serif;color:#26261a;">18220066</div>
<div class="t s" style="left:413.40px;top:440.57px;font:normal 8.1px/11px 'Liberation Serif', serif;color:#26261a;">JL AiJia Trading Ltd</div>
<div class="t s" style="left:540.60px;top:440.57px;font:normal 8.1px/11px 'Liberation Serif', serif;color:#26261a;">North</div>
<div class="t s" style="left:22.30px;top:450.57px;font:normal 8.1px/11px 'Liberation Serif', serif;color:#26261a;">37</div>
<div class="t s" style="left:53.60px;top:450.57px;font:normal 8.1px/11px 'Liberation Serif', serif;color:#26261a;">Discountinued/Obselete Items</div>
<div class="t s" style="left:162.50px;top:450.57px;font:normal 8.1px/11px 'Liberation Serif', serif;color:#26261a;">1525105</div>
<div class="t s" style="left:228.50px;top:450.57px;font:normal 8.1px/11px 'Liberation Serif', serif;color:#26261a;">Plax Freshmint 500ml w/necktag(CN)</div>
<div class="t s" style="left:369.30px;top:450.57px;font:normal 8.1px/11px 'Liberation Serif', serif;color:#26261a;">18220351</div>
<div class="t s" style="left:413.40px;top:450.57px;font:normal 8.1px/11px 'Liberation Serif', serif;color:#26261a;">HLJ HaErBin BJHL 5th Branch</div>
<div class="t s" style="left:540.60px;top:450.57px;font:normal 8.1px/11px 'Liberation Serif', serif;color:#26261a;">North</div>
<div class="t s" style="left:22.30px;top:460.57px;font:normal 8.1px/11px 'Liberation Serif', serif;color:#26261a;">37</div>
<div class="t s" style="left:53.60px;top:460.57px;font:normal 8.1px/11px 'Liberation Serif', serif;color:#26261a;">Discountinued/Obselete Items</div>
<div class="t s" style="left:162.50px;top:460.57px;font:normal 8.1px/11px 'Liberation Serif', serif;color:#26261a;">1525105</div>
<div class="t s" style="left:228.50px;top:460.57px;font:normal 8.1px/11px 'Liberation Serif', serif;color:#26261a;">Plax Freshmint 500ml w/necktag(CN)</div>
<div class="t s" style="left:369.30px;top:460.57px;font:normal 8.1px/11px 'Liberation Serif', serif;color:#26261a;">18220381</div>
<div class="t s" style="left:413.40px;top:460.57px;font:normal 8.1px/11px 'Liberation Serif', serif;color:#26261a;">SH Kangcheng Touzi RTMART</div>
<div class="t s" style="left:540.60px;top:460.57px;font:normal 8.1px/11px 'Liberation Serif', serif;color:#26261a;">East</div>
<div class="t s" style="left:22.30px;top:470.57px;font:normal 8.1px/11px 'Liberation Serif', serif;color:#26261a;">37</div>
<div class="t s" style="left:53.60px;top:470.57px;font:normal 8.1px/11px 'Liberation Serif', serif;color:#26261a;">Discountinued/Obselete Items</div>
<div class="t s" style="left:162.50px;top:470.57px;font:normal 8.1px/11px 'Liberation Serif', serif;color:#26261a;">1525105</div>
<div class="t s" style="left:228.50px;top:470.57px;font:normal 8.1px/11px 'Liberation Serif', serif;color:#26261a;">Plax Freshmint 500ml w/necktag(CN)</div>
<div class="t s" style="left:369.30px;top:470.57px;font:normal 8.1px/11px 'Liberation Serif', serif;color:#26261a;">18220448</div>
<div class="t s" style="left:413.40px;top:470.57px;font:normal 8.1px/11px 'Liberation Serif', serif;color:#26261a;">GX BJHL Nanning No.7 Branch</div>
<div class="t s" style="left:540.60px;top:470.57px;font:normal 8.1px/11px 'Liberation Serif', serif;color:#26261a;">West</div>
<div class="t s" style="left:22.30px;top:480.57px;font:normal 8.1px/11px 'Liberation Serif', serif;color:#26261a;">37</div>
<div class="t s" style="left:53.60px;top:480.57px;font:normal 8.1px/11px 'Liberation Serif', serif;color:#26261a;">Discountinued/Obselete Items</div>
<div class="t s" style="left:162.50px;top:480.57px;font:normal 8.1px/11px 'Liberation Serif', serif;color:#26261a;">1525105</div>
<div class="t s" style="left:228.50px;top:480.57px;font:normal 8.1px/11px 'Liberation Serif', serif;color:#26261a;">Plax Freshmint 500ml w/necktag(CN)</div>
<div class="t s" style="left:369.30px;top:480.57px;font:normal 8.1px/11px 'Liberation Serif', serif;color:#26261a;">18220519</div>
<div class="t s" style="left:413.40px;top:480.57px;font:normal 8.1px/11px 'Liberation Serif', serif;color:#26261a;">Shanghai Kaijie Ecommerce Ltd</div>
<div class="t s" style="left:540.60px;top:480.57px;font:normal 8.1px/11px 'Liberation Serif', serif;color:#26261a;">East</div>
<div class="t s" style="left:22.30px;top:490.57px;font:normal 8.1px/11px 'Liberation Serif', serif;color:#26261a;">37</div>
<div class="t s" style="left:53.60px;top:490.57px;font:normal 8.1px/11px 'Liberation Serif', serif;color:#26261a;">Discountinued/Obselete Items</div>
<div class="t s" style="left:162.50px;top:490.57px;font:normal 8.1px/11px 'Liberation Serif', serif;color:#26261a;">1525105</div>
<div class="t s" style="left:228.50px;top:490.57px;font:normal 8.1px/11px 'Liberation Serif', serif;color:#26261a;">Plax Freshmint 500ml w/necktag(CN)</div>
<div class="t s" style="left:369.30px;top:490.57px;font:normal 8.1px/11px 'Liberation Serif', serif;color:#26261a;">18220588</div>
<div class="t s" style="left:413.40px;top:490.57px;font:normal 8.1px/11px 'Liberation Serif', serif;color:#26261a;">Shanghai Xinjiajia Meirong Ltd</div>
<div class="t s" style="left:540.60px;top:490.57px;font:normal 8.1px/11px 'Liberation Serif', serif;color:#26261a;">East</div>
<div class="t s" style="left:22.30px;top:500.57px;font:normal 8.1px/11px 'Liberation Serif', serif;color:#26261a;">37</div>
<div class="t s" style="left:53.60px;top:500.57px;font:normal 8.1px/11px 'Liberation Serif', serif;color:#26261a;">Discountinued/Obselete Items</div>
<div class="t s" style="left:162.50px;top:500.57px;font:normal 8.1px/11px 'Liberation Serif', serif;color:#26261a;">1525105</div>
<div class="t s" style="left:228.50px;top:500.57px;font:normal 8.1px/11px 'Liberation Serif', serif;color:#26261a;">Plax Freshmint 500ml w/necktag(CN)</div>
<div class="t s" style="left:369.30px;top:500.57px;font:normal 8.1px/11px 'Liberation Serif', serif;color:#26261a;">18220588</div>
<div class="t s" style="left:413.40px;top:500.57px;font:normal 8.1px/11px 'Liberation Serif', serif;color:#26261a;">Shanghai Xinjiajia Meirong Ltd</div>
<div class="t s" style="left:540.60px;top:500.57px;font:normal 8.1px/11px 'Liberation Serif', serif;color:#26261a;">East</div>
<div class="r" style="left:557.8px;top:91.7px;width:8.5px;height:420px;background:#fafafa"></div>
<div class="r" style="left:559.5px;top:181px;width:5px;height:6px;background:#c4c4c4;border-radius:3px"></div>
<div class="r" style="left:0px;top:511.9px;width:566px;height:26.6px;background:#f7f7f7"></div>
<div class="r" style="left:23px;top:514.9px;width:191px;height:3.8px;background:#c9c9c9;border-radius:2px"></div>
<div class="t " style="left:-94.50px;width:200px;text-align:center;top:523.33px;font:normal 8px/11px 'Liberation Sans', sans-serif;color:#cfcfcf;">&#8249;</div>
<div class="t " style="left:-76.20px;width:200px;text-align:center;top:523.33px;font:normal 8px/11px 'Liberation Sans', sans-serif;color:#cfcfcf;">&#8250;</div>
<div class="r" style="left:38.1px;top:526.1px;width:7px;height:0.8px;background:#666"></div>
<div class="r" style="left:38.1px;top:528.5px;width:7px;height:0.8px;background:#666"></div>
<div class="r" style="left:38.1px;top:531px;width:7px;height:0.8px;background:#666"></div>
<div class="t m" style="left:55.90px;top:523.29px;font:normal 8.1px/11px 'Liberation Sans', sans-serif;color:#3a3a3a;">Details</div>
<div class="r" style="left:55.9px;top:536.7px;width:23.4px;height:1.8px;background:#1f7a4d"></div>
<div class="r" style="left:90.2px;top:529.6px;width:8px;height:0.7px;background:#e2e2e2"></div>
<div class="r" style="left:93.8px;top:526px;width:0.7px;height:7.5px;background:#e2e2e2"></div>
<div class="r" style="left:0px;top:538.5px;width:566px;height:14.5px;background:#393a3d"></div>
<svg class="r" style="left:0px;top:539px;width:13px;height:14px" viewBox="0 0 13 14"><rect x="6.3" y="2" width="5" height="9.8" fill="#f0f0f0"/><g fill="#666"><rect x="7" y="2.8" width="1.3" height="1.3"/><rect x="9" y="2.8" width="1.3" height="1.3"/><rect x="7" y="4.8" width="1.3" height="1.3"/><rect x="9" y="4.8" width="1.3" height="1.3"/><rect x="7" y="6.8" width="1.3" height="1.3"/><rect x="9" y="6.8" width="1.3" height="1.3"/><rect x="7" y="8.8" width="1.3" height="1.3"/><rect x="9" y="8.8" width="1.3" height="1.3"/></g><path d="M0 1.8L6.3 0.8V12.5L0 11.6Z" fill="#fff"/><path d="M1.5 4.2L4.3 8.6M4.3 4.2L1.5 8.6" stroke="#444" stroke-width="1.3"/></svg>
<svg class="r" style="left:508px;top:541px;width:56px;height:11px" viewBox="0 0 56 11"><g fill="none" stroke="#e6e6e6" stroke-width="1.1"><path d="M1.5 2H4.5L5.5 3H9V9.5H1.5Z"/><circle cx="8" cy="7.8" r="2" fill="#393a3d"/></g><path d="M16 3.2L17.8 1.2H21.2L23 3.2V10H16Z" fill="#ececec"/><path d="M17.6 6.2L19.1 7.6L21.6 4.6" fill="none" stroke="#393a3d" stroke-width="1.1"/><rect x="31" y="1.5" width="8" height="8.5" fill="#ececec"/><path d="M34 1.5V10M36 3.5V8" stroke="#9a9a9a" stroke-width="0.8"/><g fill="none" stroke="#e6e6e6" stroke-width="1.1"><path d="M49.5 2H54V6H49.5Z"/><path d="M46.5 5.5H49.5V9H46.5Z"/></g></svg>
</div>
<div class="t " style="left:580.00px;top:55.09px;font:bold 8.4px/11px 'Liberation Sans', sans-serif;color:#1f1f1f;letter-spacing:-0.15px;">AI Chat</div>
<div class="r" style="left:580px;top:76px;width:19px;height:19px"><svg width="100%" height="100%" viewBox="0 0 19 19"><circle cx="9.5" cy="9.5" r="9.5" fill="#3a5ce6"/><path d="M12.9 4.9H9.6A4.6 4.6 0 0 0 9.6 14.1H12.9M6.8 9.5H12.9" fill="none" stroke="#fff" stroke-width="1.8" stroke-linecap="round"/></svg></div>
<div class="r" style="left:601px;top:75.3px;width:417px;height:45.2px;background:#fff;border-radius:6px"></div>
<div class="t n" style="left:608.00px;top:83.19px;font:normal 8.1px/11px 'Liberation Sans', sans-serif;color:#333;">Your file 'file_20250218071807.xlsx' was successfully uploaded, please enter the operation description you need</div>
<div class="t n" style="left:608.00px;top:95.89px;font:normal 8.1px/11px 'Liberation Sans', sans-serif;color:#333;">for it or preview your file</div>
<div class="r" style="left:803.7px;top:136px;width:190.3px;height:25.6px;background:#6e7df1;border-radius:4px"></div>
<div class="t n" style="left:810.60px;top:143.73px;font:normal 8px/11px 'Liberation Sans', sans-serif;color:#fff;">Please calculate the top 10 canceled SKUs for me</div>
<div class="r" style="left:998.4px;top:136.2px;width:19px;height:19px"><svg width="100%" height="100%" viewBox="0 0 22 22"><defs><clipPath id="avc2"><circle cx="11" cy="11" r="9.8"/></clipPath></defs><circle cx="11" cy="11" r="11" fill="#3aa7f4"/><circle cx="11" cy="8.3" r="4.5" fill="#fff"/><ellipse cx="11" cy="19.6" rx="7.6" ry="5.6" fill="#fff" clip-path="url(#avc2)"/></svg></div>
<div class="r" style="left:580px;top:177.3px;width:19px;height:19px"><svg width="100%" height="100%" viewBox="0 0 19 19"><circle cx="9.5" cy="9.5" r="9.5" fill="#3a5ce6"/><path d="M12.9 4.9H9.6A4.6 4.6 0 0 0 9.6 14.1H12.9M6.8 9.5H12.9" fill="none" stroke="#fff" stroke-width="1.8" stroke-linecap="round"/></svg></div>
<div class="r" style="left:570.8px;top:37px;width:453px;height:407px;overflow:hidden">
<div class="r" style="left:30.200000000000045px;top:141px;width:417px;height:400px;background:#fff;border-radius:6px"></div>
</div>
<div class="t n" style="left:608.00px;top:185.31px;font:normal 8.05px/11px 'Liberation Sans', sans-serif;color:#333;">Here are the top 10 canceled SKUs based on the total amount of cancellations:</div>
<div class="r" style="left:570.8px;top:37px;width:453px;height:407px;overflow:hidden">
<div class="r" style="left:37.50px;top:170.90px;width:403.5px;height:300px;border:0.7px solid #eceef0;box-sizing:border-box;border-radius:2px"></div>
<div class="r" style="left:38.20px;top:171.60px;width:402.1px;height:21.4px;background:#f8f9fb"></div>
<div class="r" style="left:37.50px;top:193.00px;width:403.5px;height:0.8px;background:#e6e7ea"></div>
<div class="r" style="left:37.50px;top:222.55px;width:403.5px;height:0.7px;background:#f1f2f4"></div>
<div class="r" style="left:37.50px;top:252.10px;width:403.5px;height:0.7px;background:#f1f2f4"></div>
<div class="r" style="left:37.50px;top:281.65px;width:403.5px;height:0.7px;background:#f1f2f4"></div>
<div class="r" style="left:37.50px;top:311.20px;width:403.5px;height:0.7px;background:#f1f2f4"></div>
<div class="r" style="left:37.50px;top:340.75px;width:403.5px;height:0.7px;background:#f1f2f4"></div>
<div class="r" style="left:37.50px;top:370.30px;width:403.5px;height:0.7px;background:#f1f2f4"></div>
<div class="r" style="left:37.50px;top:399.85px;width:403.5px;height:0.7px;background:#f1f2f4"></div>
<div class="r" style="left:168.40px;top:170.90px;width:0.8px;height:300px;background:#e9eaed"></div>
</div>
<div class="t " style="left:615.00px;top:215.21px;font:normal 6.6px/9px 'Liberation Sans', sans-serif;color:#5f6368;letter-spacing:0.5px;">SKU</div>
<div class="t " style="left:746.70px;top:215.21px;font:normal 6.6px/9px 'Liberation Sans', sans-serif;color:#5f6368;letter-spacing:0.5px;">TOTAL CANCELED AMOUNT</div>
<div class="t n" style="left:615.00px;top:239.99px;font:normal 8.1px/11px 'Liberation Sans', sans-serif;color:#222;">181189459</div>
<div class="t n" style="left:746.80px;top:239.99px;font:normal 8.1px/11px 'Liberation Sans', sans-serif;color:#222;">2100</div>
<div class="t n" style="left:615.00px;top:269.54px;font:normal 8.1px/11px 'Liberation Sans', sans-serif;color:#222;">181712066</div>
<div class="t n" style="left:746.80px;top:269.54px;font:normal 8.1px/11px 'Liberation Sans', sans-serif;color:#222;">1914</div>
<div class="t n" style="left:615.00px;top:299.09px;font:normal 8.1px/11px 'Liberation Sans', sans-serif;color:#222;">181189461</div>
<div class="t n" style="left:746.80px;top:299.09px;font:normal 8.1px/11px 'Liberation Sans', sans-serif;color:#222;">1274</div>
<div class="t n" style="left:615.00px;top:328.64px;font:normal 8.1px/11px 'Liberation Sans', sans-serif;color:#222;">181189762</div>
<div class="t n" style="left:746.80px;top:328.64px;font:normal 8.1px/11px 'Liberation Sans', sans-serif;color:#222;">1080</div>
<div class="t n" style="left:615.00px;top:358.19px;font:normal 8.1px/11px 'Liberation Sans', sans-serif;color:#222;">181189761</div>
<div class="t n" style="left:746.80px;top:358.19px;font:normal 8.1px/11px 'Liberation Sans', sans-serif;color:#222;">932</div>
<div class="t n" style="left:615.00px;top:387.74px;font:normal 8.1px/11px 'Liberation Sans', sans-serif;color:#222;">181189215</div>
<div class="t n" style="left:746.80px;top:387.74px;font:normal 8.1px/11px 'Liberation Sans', sans-serif;color:#222;">832</div>
<div class="t n" style="left:615.00px;top:417.29px;font:normal 8.1px/11px 'Liberation Sans', sans-serif;color:#222;">181189955</div>
<div class="t n" style="left:746.80px;top:417.29px;font:normal 8.1px/11px 'Liberation Sans', sans-serif;color:#222;">764</div>
<div class="r" style="left:580px;top:464.5px;width:438.2px;height:77.2px;background:#fff;border-radius:6px"></div>
<div class="t n" style="left:589.70px;top:473.86px;font:normal 9.05px/12px 'Liberation Sans', sans-serif;color:#8e8e8e;">You can ask questions or perform operations on the file to be analyzed</div>
<div class="r" style="left:978.3px;top:521.9px;width:33.7px;height:15.2px;background:#3d5ef0;border-radius:2.5px"></div>
<div class="t n" style="left:895.10px;width:200px;text-align:center;top:524.12px;font:normal 8.3px/11px 'Liberation Sans', sans-serif;color:#fff;">Send</div>
</body></html>
